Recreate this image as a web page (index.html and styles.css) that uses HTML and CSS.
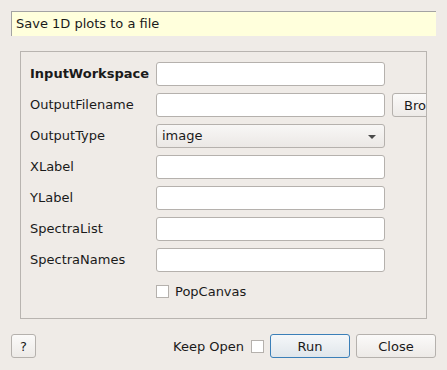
FILE: index.html
```html
<!doctype html>
<html lang="en">
<head>
    <meta charset="UTF-8">
    <title>SavePlot1D</title>
    <link rel="stylesheet" href="styles.css">
</head>
<body>
    <div class="dialog">
        <div class="summary">Save 1D plots to a file</div>

        <div class="props">
            <label class="name bold">InputWorkspace</label>
            <input type="text" class="field">
            <span></span>

            <label class="name">OutputFilename</label>
            <input type="text" class="field">
            <button class="btn browse">Browse</button>

            <label class="name">OutputType</label>
            <div class="field combo">image<i class="arrow"></i></div>
            <span></span>

            <label class="name">XLabel</label>
            <input type="text" class="field">
            <span></span>

            <label class="name">YLabel</label>
            <input type="text" class="field">
            <span></span>

            <label class="name">SpectraList</label>
            <input type="text" class="field">
            <span></span>

            <label class="name">SpectraNames</label>
            <input type="text" class="field">
            <span></span>

            <span></span>
            <label class="check"><i class="box"></i>PopCanvas</label>
            <span></span>
        </div>

        <div class="footer">
            <button class="btn help">?</button>
            <span class="keep">Keep Open<i class="box"></i></span>
            <button class="btn run">Run</button>
            <button class="btn close">Close</button>
        </div>
    </div>
</body>
</html>
```

FILE: styles.css
```css
*{
    margin: 0;
    padding: 0;
    box-sizing: border-box;
}
body{
    background: #efebe7;
    font-family: "DejaVu Sans", sans-serif;
    font-size: 13px;
    color: #1a1a1a;
    width: 447px;height: 370px;overflow: hidden;
}
.dialog{
    padding: 11px 11px 0 11px;
}
.summary{
    height: 25px;
    background: #ffffdc;
    border-top: 1px solid #a3a3a3;border-left: 1px solid #a3a3a3;
    padding-left: 4px;line-height: 24px;
}
.props{
    margin: 15px 9px 0 9px;
    height: 268px;
    border: 1px solid #b8b4b0;
    overflow: hidden;
    display: grid;
    grid-template-columns: 119px 229px 1fr;
    grid-auto-rows: 24px;
    row-gap: 7px;column-gap: 7px;
    padding: 10px 0 0 9px;
    align-content: start;
}
.name{
    line-height: 24px;white-space: nowrap;
}
.bold{
    font-weight: bold;
}
.field{
    height: 24px;width: 229px;
    background: #fff;
    border: 1px solid #b5b1ad;border-radius: 3px;
    font: inherit;outline: none;
}
.combo{
    position: relative;
    background: linear-gradient(#f8f7f6, #ebe8e5);
    padding-left: 5px;line-height: 22px;
}
.arrow{
    position: absolute;right: 8px;top: 10px;
    border-left: 4px solid transparent;border-right: 4px solid transparent;
    border-top: 4px solid #4a4a4a;
}
.btn{
    font: inherit;color: #1a1a1a;
    height: 24px;
    border: 1px solid #b5b1ad;border-radius: 3px;
    background: linear-gradient(#fbfaf9, #edeae7);
}
.browse{
    width: 60px;text-align: left;padding-left: 11px;
}
.check{
    display: flex;align-items: center;gap: 6px;
    height: 24px;white-space: nowrap;
}
.box{
    display: inline-block;width: 13px;height: 13px;
    background: #fff;border: 1px solid #b5b1ad;
}
.footer{
    display: flex;align-items: center;
    margin-top: 15px;
    height: 24px;
}
.help{
    width: 25px;
}
.keep{
    margin-left: auto;
    display: flex;align-items: center;gap: 7px;
}
.run{
    width: 80px;margin-left: 6px;
    border-color: #3b7fb8;
    background: linear-gradient(#f5f7f9, #e0e6eb);
}
.close{
    width: 80px;margin-left: 6px;
}
```
